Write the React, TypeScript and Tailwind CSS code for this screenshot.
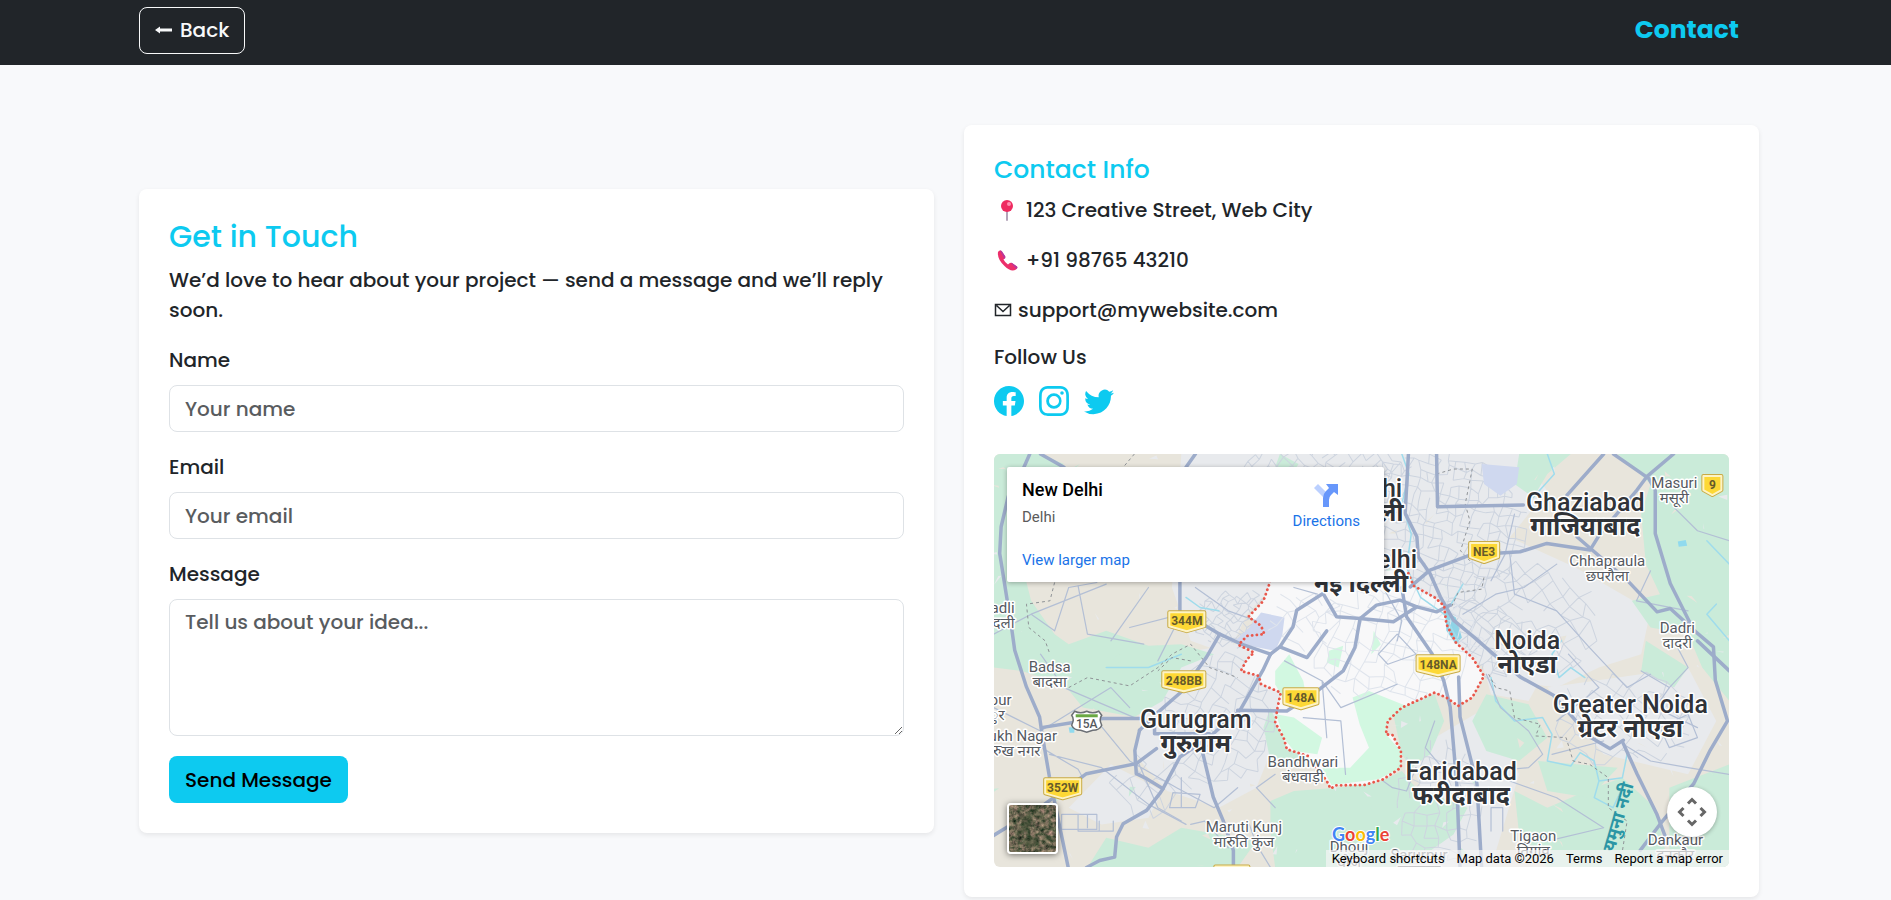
import { useState } from "react";
import type { FormEvent, ReactElement } from "react";
import { BsFacebook, BsInstagram, BsTwitter } from "react-icons/bs";

// ── map helpers ───────────────────────────────────────────────────────────────

function makeRandom(seed: number): () => number {
  let s = seed;
  return () => {
    s = (s * 16807) % 2147483647;
    return s / 2147483647;
  };
}

/** Jittered street grid inside an ellipse, rotated by `angle` degrees. */
function streets(
  cx: number,
  cy: number,
  rx: number,
  ry: number,
  cell: number,
  angle: number,
  seed: number,
): string {
  const rnd = makeRandom(seed);
  const rad = (angle * Math.PI) / 180;
  const reach = Math.ceil(Math.max(rx, ry) / cell);
  const pts = new Map<string, [number, number]>();
  for (let i = -reach; i <= reach; i++) {
    for (let j = -reach; j <= reach; j++) {
      const x = i * cell + (rnd() - 0.5) * cell * 0.7;
      const y = j * cell + (rnd() - 0.5) * cell * 0.7;
      const px = x * Math.cos(rad) - y * Math.sin(rad);
      const py = x * Math.sin(rad) + y * Math.cos(rad);
      if ((px / rx) ** 2 + (py / ry) ** 2 > 1) continue;
      pts.set(`${i},${j}`, [cx + px, cy + py]);
    }
  }
  let d = "";
  pts.forEach(([x, y], key) => {
    const [i, j] = key.split(",").map(Number);
    for (const next of [`${i + 1},${j}`, `${i},${j + 1}`]) {
      const p = pts.get(next);
      if (p === undefined || rnd() < 0.22) continue;
      d += `M${x.toFixed(1)} ${y.toFixed(1)}L${p[0].toFixed(1)} ${p[1].toFixed(1)}`;
    }
  });
  return d;
}

/** Small random triangles, used for field and village patches. */
function specks(count: number, size: number, seed: number): string {
  const rnd = makeRandom(seed);
  let d = "";
  for (let i = 0; i < count; i++) {
    const x = rnd() * 735;
    const y = rnd() * 413;
    const p = (): string =>
      `${(x + (rnd() - 0.5) * size).toFixed(1)} ${(y + (rnd() - 0.5) * size).toFixed(1)}`;
    d += `M${p()}L${p()}L${p()}Z`;
  }
  return d;
}

// ── map data ──────────────────────────────────────────────────────────────────

// Geometry is kept in survey units (1568 x 1239) and scaled to the map's box.
const SURVEY = "scale(0.46875 0.33333)";

const URBAN = [
  "M400 0H1120L1180 110 1100 250 1240 340 1400 470 1380 600 1290 640 1200 700 1100 680 1000 600 960 440 600 390 540 480 500 600 420 560 380 400Z",
  "M380 600 560 560 610 700 600 860 560 1000 480 1060 370 1010 300 900 330 760Z",
  "M880 900 1050 760 1120 960 1060 1239 900 1239 930 1060Z",
  "M1180 700 1480 640 1540 800 1480 960 1300 900Z",
  "M250 930 360 1010 330 1090 230 1110 160 1060Z",
  "M1030 570 1180 640 1140 740 1060 720Z",
];

const PARKS = [
  "M0 0H100L150 30 90 90 110 210 60 330 80 440 130 540 160 570 240 530 330 575 400 570 470 600 400 640 360 740 300 788 190 760 150 690 60 650 0 640Z",
  "M1330 0H1568V740L1510 640 1480 540 1400 520 1360 440 1420 420 1390 330 1380 180 1400 90Z",
  "M1120 0H1230L1180 60 1150 130 1110 90Z",
  "M590 1040 640 1010 730 1000 820 985 870 950 900 1000 1010 1060 980 1140 880 1239H600L590 1130Z",
  "M850 770 940 720 960 800 930 900 890 940 870 900Z",
  "M590 760 625 880 690 930 590 920 575 820Z",
  "M1050 720 1140 750 1180 850 1120 920 1050 890 1020 800Z",
  "M1110 1010 1180 1060 1280 1000 1340 970 1410 1060 1440 1239H1180L1120 1140Z",
  "M1440 1000 1568 930V1239H1440Z",
  "M200 1239 240 1150 330 1180 400 1120 560 1160 520 1239Z",
  "M1390 560 1480 640 1450 700 1380 650Z",
  "M1160 920 1330 940 1270 1030 1180 1010Z",
  "M610 0 650 30 630 70 600 40Z",
];

const DELHI =
  "M590 380 575 440 543 488 570 515 577 540 540 545 522 572 555 595 540 615 527 650 565 665 570 690 612 715 605 760 600 805 618 850 625 885 670 905 710 980 718 1003 730 993 790 992 830 975 868 940 868 890 850 842 836 840 840 800 870 760 940 715 965 730 990 755 1020 730 1045 665 1020 610 985 565 965 510 960 455 940 430 895 395 880 345";

const DELHI_PARKS = [
  "M602 780 640 790 700 850 690 900 640 890 618 850Z",
  "M765 730 800 710 880 755 840 800 836 840 868 890 868 940 820 975 720 992 700 940 760 940 800 880 780 810Z",
  "M600 650 630 600 660 680 665 720 620 740 600 690Z",
  "M715 590 745 575 735 640 710 625Z",
  "M810 530 825 570 805 600Z",
];

const LAKES = [
  "M570 475 620 490 615 545 600 590 510 565 545 520Z",
  "M1040 30 1120 40 1115 90 1080 125 1045 90Z",
];

const HIGHWAYS = [
  "M77 0 62 48 31 128 16 218 13 298 38 518 45 588 70 698 98 788 102 828 119 968 141 1118 159 1239",
  "M0 1143 105 1053 198 958 304 928 347 883",
  "M102 820 176 803 233 793 311 793",
  "M311 828 301 888 304 958 326 973 361 1003 354 1018 326 1068 276 1108 262 1148 258 1208 226 1218 198 1239",
  "M361 1003 397 908 460 848 525 768 574 648 590 600",
  "M311 828 347 778 404 708 454 608 482 540 525 568 590 600",
  "M440 505 482 540",
  "M397 380V475",
  "M590 600 610 578 638 518 646 468 702 418 731 488 781 493 852 503 902 458",
  "M781 493 816 453 866 438 902 458 944 473 973 453",
  "M781 493 770 580 745 650 690 710 625 770 520 768",
  "M610 578 668 610 710 530",
  "M884 0 877 178 902 248 905 308 930 358 952 428 980 498 1023 548 1072 608 1122 668 1193 723 1271 848 1314 883 1342 858",
  "M944 0 946 158 1129 153",
  "M888 398 930 348 1015 303 1122 293 1179 268 1271 288 1293 238 1335 168 1371 108 1392 68 1449 0",
  "M1222 123 1300 0",
  "M1321 0 1396 73 1410 108 1410 238 1442 388 1492 528 1534 578 1538 678 1564 800 1527 888 1492 988 1421 1108 1378 1188",
  "M1500 560 1568 650",
  "M1243 248 1350 378 1414 473 1442 463 1485 518",
  "M1342 868 1371 958 1413 1078 1435 1160",
  "M870 400 880 488 934 598 959 678 973 758 987 988 994 1239",
  "M991 668 994 788 1030 988 1040 1239",
  "M446 898 468 1028 489 1098 511 1188V1239",
  "M343 810V838H460",
  "M410 40 430 0M100 0 150 40",
];

const LOCAL_ROADS = [
  "M0 540 80 480 240 390M80 480 130 530 160 400 220 385M180 395 200 540 320 570",
  "M0 760 100 830 250 700 290 760M100 600 150 700 300 790",
  "M102 880 180 945 190 970M119 900 230 940 330 1050 410 1110",
  "M220 800 290 920 390 1000 470 1060 520 1000M310 930 350 1060 400 1100",
  "M145 1080H220V1125H145ZM180 1080V1130H255V1100M200 1080V1120M225 1100V1130",
  "M330 400 250 560M290 520 400 480 350 620M560 500 500 470 430 400",
  "M382 1015 440 1020 430 1060 375 1060ZM400 970V1060",
  "M1100 300 1110 420 1200 470 1270 580 1310 640 1350 700 1400 660",
  "M1200 330 1130 400 1070 420 1000 480M1110 180 1090 300 1060 380",
  "M1050 660 1080 760 1140 830 1170 900 1140 940 1060 950",
  "M1380 650 1440 700 1480 640 1450 560M1342 870 1400 920 1480 940 1568 960",
  "M1400 350 1370 440 1480 470M1450 160 1500 230 1568 260M1440 700 1410 760 1500 820",
  "M1060 1130V1060H1085V1130M1100 980 1200 1030 1300 1120 1180 1160",
  "M900 940 880 1010 850 1000 830 980M940 800 920 880 950 930",
  "M1190 900 1300 860M1225 600 1290 700 1200 800M1420 820 1480 780 1500 850 1440 880Z",
  "M620 620 700 680 740 760 860 690M660 790 740 800 750 960M700 680 710 850",
  "M690 420 640 400M820 600 860 540 900 600 840 630ZM830 400 870 500 860 560",
  "M545 1110 560 1170 590 1239M500 1180 450 1100 420 1110M600 1060 560 1000 600 960",
];

const STREAMS = [
  "M870 0 885 60 870 150 890 240 880 340 910 430 960 480 990 560",
  "M1180 0 1195 60 1150 130M1210 560 1190 600 1205 670 1230 640 1260 670",
  "M1060 670 1070 740 1110 800 1170 790 1190 840 1180 920 1230 935 1250 895 1280 920 1290 980 1340 970 1350 900M1290 980 1280 1030 1320 1060 1340 1000",
  "M1540 450 1520 480 1568 560M1520 260 1568 330",
  "M410 430 440 460 480 470M240 640 330 640 400 600M1000 390 975 450",
];

const BORDERS = [
  "M130 385 120 440 70 450 75 520 110 560 120 600 M160 700 200 670 290 695 350 640 380 600 420 570 460 640 520 670",
  "M944 60 980 45 1020 45 1005 150 1015 200 995 290 1015 320M1045 370 1040 405 990 415 975 460",
  "M1055 660 1070 700 1100 710 1110 790 1165 810 1155 845 1220 850 1235 920 1270 930 1310 970 1310 1060 1350 1100 1340 1190",
  "M300 0 270 50M420 620 380 610 350 650",
];

const CITY_GRIDS = [
  streets(440, 75, 95, 80, 9, 12, 3),
  streets(470, 190, 70, 45, 10, 30, 7),
  streets(245, 165, 48, 30, 6, 40, 11),
  streets(225, 265, 58, 72, 11, 25, 19),
  streets(535, 165, 80, 60, 14, 50, 23),
  streets(445, 350, 45, 70, 11, 5, 31),
  streets(630, 265, 75, 50, 13, 38, 43),
  streets(330, 15, 90, 25, 9, 42, 53),
  streets(155, 330, 45, 35, 14, 50, 61),
];
const DELHI_GRID =
  streets(400, 190, 90, 62, 12, 18, 71) + streets(310, 165, 40, 35, 12, 50, 73);

interface Place {
  en: string;
  hi: string;
  x: number;
  y: number;
}

const CITIES: Place[] = [
  { en: "New Delhi", hi: "नई दिल्ली", x: 367, y: 114 },
  { en: "Ghaziabad", hi: "गाजियाबाद", x: 591, y: 57 },
  { en: "Noida", hi: "नोएडा", x: 533, y: 195 },
  { en: "Greater Noida", hi: "ग्रेटर नोएडा", x: 636, y: 259 },
  { en: "Gurugram", hi: "गुरुग्राम", x: 202, y: 274 },
  { en: "Faridabad", hi: "फरीदाबाद", x: 467, y: 326 },
];

const TOWNS: Place[] = [
  { en: "Masuri", hi: "मसूरी", x: 680, y: 34 },
  { en: "Chhapraula", hi: "छपरौला", x: 613, y: 112 },
  { en: "Dadri", hi: "दादरी", x: 683, y: 179 },
  { en: "Badsa", hi: "बादसा", x: 56, y: 218 },
  { en: "Bandhwari", hi: "बंधवाड़ी", x: 309, y: 313 },
  { en: "Maruti Kunj", hi: "मारुति कुंज", x: 250, y: 378 },
  { en: "Tigaon", hi: "तिगांव", x: 539, y: 387 },
  { en: "Dankaur", hi: "दनकौर", x: 681, y: 391 },
  { en: "Dhouj", hi: "धौज", x: 355, y: 398 },
  { en: "Sarurpur", hi: "सरूरपुर", x: 425, y: 406 },
];

const SHIELDS = [
  { name: "344M", x: 193, y: 167, w: 35 },
  { name: "248BB", x: 190, y: 227, w: 41 },
  { name: "148A", x: 307, y: 244, w: 33 },
  { name: "148NA", x: 444, y: 211, w: 41 },
  { name: "352W", x: 69, y: 334, w: 35 },
  { name: "NE3", x: 490, y: 98, w: 28 },
  { name: "9", x: 718, y: 31, w: 18 },
  { name: "", x: 238, y: 421, w: 33 },
];

// ── map drawing ───────────────────────────────────────────────────────────────

function MapDrawing(): ReactElement {
  return (
    <svg
      viewBox="0 0 735 413"
      preserveAspectRatio="xMidYMid slice"
      className="absolute inset-0 h-full w-full font-[Roboto,'Noto_Sans',sans-serif]"
      role="img"
      aria-label="Map of New Delhi"
    >
      <rect width="735" height="413" fill="#e8e5dc" />
      <g transform={SURVEY}>
        {URBAN.map((d) => (
          <path key={d} d={d} fill="#e8eaed" />
        ))}
        {PARKS.map((d) => (
          <path key={d} d={d} fill="#caebd9" />
        ))}
      </g>
      <path d={specks(60, 14, 5)} fill="#e8e5dc" />
      <path d={specks(80, 10, 17)} fill="#e8eaed" />
      <path d={specks(22, 13, 29)} fill="#caebd9" />
      {CITY_GRIDS.map((d) => (
        <path key={d.slice(0, 24)} d={d} fill="none" stroke="#cdd4df" strokeWidth="1" />
      ))}
      <g transform={SURVEY}>
        <path d={DELHI} fill="#f8f8f9" />
        {DELHI_PARKS.map((d) => (
          <path key={d} d={d} fill="#d2f8e1" />
        ))}
        {LAKES.map((d) => (
          <path key={d} d={d} fill="#cfd8ef" />
        ))}
        <path d="M962 470 985 490 998 550 985 570 965 530Z" fill="#8fd3e6" />
        <path d="M1458 262 1475 258 1478 275 1460 278ZM160 820 172 818 172 835 162 835Z" fill="#90daee" />
      </g>
      <path d={DELHI_GRID} fill="none" stroke="#dfe4ec" strokeWidth="1" />
      <g transform={SURVEY} fill="none" strokeLinejoin="round" strokeLinecap="round">
        {STREAMS.map((d) => (
          <path key={d} d={d} stroke="#9fdcec" strokeWidth="1.5" vectorEffect="non-scaling-stroke" />
        ))}
        {LOCAL_ROADS.map((d) => (
          <path key={d} d={d} stroke="#b3bfd5" strokeWidth="1.2" vectorEffect="non-scaling-stroke" />
        ))}
        {BORDERS.map((d) => (
          <path
            key={d}
            d={d}
            stroke="#8f9397"
            strokeWidth="1"
            strokeDasharray="3 3"
            strokeLinecap="butt"
            vectorEffect="non-scaling-stroke"
          />
        ))}
        {HIGHWAYS.map((d) => (
          <path key={d} d={d} stroke="#9dacca" strokeWidth="3.5" vectorEffect="non-scaling-stroke" />
        ))}
        <path
          d={DELHI}
          stroke="#e9574b"
          strokeWidth="2.8"
          strokeDasharray="0.1 4.6"
          vectorEffect="non-scaling-stroke"
        />
      </g>

      {/* Road shields */}
      {SHIELDS.map((s) => (
        <g key={s.name} transform={`translate(${s.x} ${s.y})`}>
          <path
            d={`M${-s.w / 2} -9H${s.w / 2}V5L0 10L${-s.w / 2} 5Z`}
            fill="#fdd835"
            stroke="#c9ab45"
            strokeWidth="4"
            strokeLinejoin="round"
          />
          <path
            d={`M${-s.w / 2} -9H${s.w / 2}V5L0 10L${-s.w / 2} 5Z`}
            fill="#fdd835"
            stroke="#fdf3c4"
            strokeWidth="2"
            strokeLinejoin="round"
          />
          <text y="4" textAnchor="middle" fontSize="12" fontWeight="700" fill="#655a2b">
            {s.name}
          </text>
        </g>
      ))}
      <g transform="translate(93 267)">
        <path
          d="M-12 -10Q-6 -7 0 -10Q6 -7 12 -10L15 -6Q12 -2 15 4Q13 9 6 9L0 11L-6 9Q-13 9 -15 4Q-12 -2 -15 -6Z"
          fill="#fff"
          stroke="#6b6f75"
          strokeWidth="1.5"
        />
        <path d="M-11 -7H11V-4H-11Z" fill="#6aa843" />
        <text y="7" textAnchor="middle" fontSize="12" fontWeight="500" fill="#55585d">
          15A
        </text>
      </g>

      {/* Place names */}
      <g textAnchor="middle" stroke="#fff" strokeWidth="3" strokeLinejoin="round" paintOrder="stroke">
        <g fill="#55595f" fontSize="15">
          {TOWNS.map((p) => (
            <text key={p.en} x={p.x} y={p.y}>
              {p.en}
              <tspan x={p.x} dy="15">
                {p.hi}
              </tspan>
            </text>
          ))}
          <g textAnchor="start">
            <text x="-3" y="159">
              adli
              <tspan x="-1" dy="15">
                दली
              </tspan>
            </text>
            <text x="-4" y="251">
              our
              <tspan x="-4" dy="15">
                ुर
              </tspan>
            </text>
            <text x="-5" y="287">
              ukh Nagar
              <tspan x="-1" dy="15">
                रुख नगर
              </tspan>
            </text>
          </g>
        </g>
        <g fill="#303338" fontSize="25" fontWeight="500">
          <text x="380" y="43">
            Delhi
            <tspan x="380" dy="24" fontWeight="700">
              दिल्ली
            </tspan>
          </text>
          {CITIES.map((p) => (
            <text key={p.en} x={p.x} y={p.y}>
              {p.en}
              <tspan x={p.x} dy="24" fontWeight="700">
                {p.hi}
              </tspan>
            </text>
          ))}
        </g>
      </g>
      <text
        transform="translate(620 398) rotate(-74)"
        fontSize="18"
        fontWeight="700"
        fill="#2b96a5"
      >
        यमुना नदी
      </text>
      <text
        x="338"
        y="387"
        fontSize="18"
        fontWeight="700"
        stroke="#fff"
        strokeWidth="2"
        paintOrder="stroke"
        className="font-[Lato,sans-serif]"
      >
        <tspan fill="#4285f4">G</tspan>
        <tspan fill="#ea4335">o</tspan>
        <tspan fill="#fbbc04">o</tspan>
        <tspan fill="#4285f4">g</tspan>
        <tspan fill="#34a853">l</tspan>
        <tspan fill="#ea4335">e</tspan>
      </text>
    </svg>
  );
}

function SatelliteThumb(): ReactElement {
  return (
    <svg viewBox="0 0 48 48" className="block h-full w-full">
      <defs>
        <filter id="terrain" x="0" y="0" width="100%" height="100%" colorInterpolationFilters="sRGB">
          <feTurbulence type="fractalNoise" baseFrequency="0.22" numOctaves="5" seed="8" />
          <feColorMatrix values="0.9 0.1 0 0 -0.08  0.6 0.2 0 0 0  0.6 0.1 0 0 -0.03  0 0 0 0 1" />
        </filter>
        <filter id="soften">
          <feGaussianBlur stdDeviation="1.5" />
        </filter>
      </defs>
      <rect width="48" height="48" filter="url(#terrain)" />
      <path
        d="M26 0Q26 8 31 12T38 24M8 30Q16 22 14 12L22 9Q24 20 18 26ZM14 36Q22 30 30 34L27 42Q18 44 14 36ZM34 34Q42 30 46 38"
        fill="#2f4429"
        fillOpacity="0.5"
        stroke="#2f4429"
        strokeOpacity="0.5"
        strokeWidth="2"
        filter="url(#soften)"
      />
    </svg>
  );
}

function MapPanel(): ReactElement {
  return (
    <div className="relative aspect-video overflow-hidden rounded-md font-[Roboto,sans-serif] font-normal">
      <MapDrawing />

      <div className="absolute top-[13px] left-[13px] flex w-[377px] justify-between rounded-xs bg-white pt-[11px] pr-6 pb-3 pl-[15px] shadow-[0_1px_5px_rgba(0,0,0,0.3)]">
        <div className="flex flex-col items-start">
          <p className="text-[18px] leading-6 font-medium text-black">New Delhi</p>
          <p className="mt-1 text-[15px] leading-[22px] text-[#5b5b5b]">Delhi</p>
          <a href="#map" className="mt-[22px] text-[15px] leading-5 text-[#1a73e8]">
            View larger map
          </a>
        </div>
        <a href="#directions" className="flex flex-col items-center pt-[5px] text-[15px] leading-5 text-[#1a73e8]">
          <svg viewBox="0 0 24 24" className="mb-1 h-6 w-6">
            <path d="M4 1 14 11 10 15 0 5Z" fill="#bbd0ff" />
            <path d="M9 24V15Q9 11 12 8L15 5 12 1H24V12L20 9 17 12Q15 14 15 17V24Z" fill="#6797fb" />
          </svg>
          Directions
        </a>
      </div>

      <button
        type="button"
        aria-label="Show satellite imagery"
        className="absolute bottom-[13px] left-[13px] h-[51px] w-[51px] overflow-hidden rounded-sm border-2 border-white shadow-[0_1px_6px_rgba(0,0,0,0.5)]"
      >
        <SatelliteThumb />
      </button>

      <button
        type="button"
        aria-label="Map camera controls"
        className="absolute right-3 bottom-[30px] flex h-[50px] w-[50px] items-center justify-center rounded-full bg-white shadow-[0_1px_4px_rgba(0,0,0,0.3)]"
      >
        <svg viewBox="0 0 30 30" className="h-[30px] w-[30px]" fill="none" stroke="#666" strokeWidth="3">
          <path d="M11 6.5 15 2.5 19 6.5M11 23.5 15 27.5 19 23.5M6.5 11 2.5 15 6.5 19M23.5 11 27.5 15 23.5 19" />
        </svg>
      </button>

      <div className="absolute right-0 bottom-0 flex text-[13px] leading-[17px] text-black">
        <button type="button" className="bg-[#f5f5f5]/70 px-[6px]">
          Keyboard shortcuts
        </button>
        <span className="bg-[#f5f5f5]/70 px-[6px]">Map data ©2026</span>
        <a href="#terms" className="bg-[#f5f5f5]/70 px-[6px]">
          Terms
        </a>
        <a href="#report" className="bg-[#f5f5f5]/70 px-[6px]">
          Report a map error
        </a>
      </div>
    </div>
  );
}

// ── contact icons ─────────────────────────────────────────────────────────────

function PinIcon(): ReactElement {
  return (
    <svg viewBox="0 0 25 25" className="mr-[7px] h-[25px] w-[25px]">
      <rect x="12" y="11" width="2" height="12" rx="1" fill="#b3a3b8" />
      <circle cx="13" cy="8" r="6" fill="#ee2b60" />
      <circle cx="15" cy="6" r="2" fill="#ff8fb0" />
    </svg>
  );
}

function PhoneIcon(): ReactElement {
  return (
    <svg viewBox="0 0 25 25" className="mr-[7px] h-[25px] w-[25px]">
      <path
        d="M4 4Q6 1.5 8 3.5L11 8Q12 10 9.5 11.5Q11 14.5 14 16.5Q16 14 18 15L23 18.5Q24 20 22 21.5Q17 24.5 10.5 18Q3 11 4 4Z"
        fill="#ec2f6b"
      />
      <path
        d="M6 2.5Q7 2 8 3.5L11 8Q12 9.5 10.5 11ZM17 15Q17.5 14.5 18 15L23 18.5Q24 19.5 22.5 21Z"
        fill="#b5389f"
      />
    </svg>
  );
}

function MailIcon(): ReactElement {
  return (
    <svg viewBox="0 0 18 14" className="mr-[6px] h-[14px] w-[18px]" fill="none" stroke="#212529" strokeWidth="1.5">
      <path d="M1.5 1.5H16.5V12.5H1.5ZM2.5 2.5 9 8.5 15.5 2.5" />
    </svg>
  );
}

// ── page ──────────────────────────────────────────────────────────────────────

const FIELD =
  "block w-full rounded-lg border border-[#dee2e6] bg-white px-[15px] placeholder:text-[#595c5f] focus:border-[#0dcaf0] focus:outline-none";

function ContactForm(): ReactElement {
  const [name, setName] = useState("");
  const [email, setEmail] = useState("");
  const [message, setMessage] = useState("");

  const handleSubmit = (event: FormEvent<HTMLFormElement>): void => {
    event.preventDefault();
    setName("");
    setEmail("");
    setMessage("");
  };

  return (
    <section className="rounded-lg bg-white p-[30px] shadow-[0_2px_5px_rgba(0,0,0,0.08)]">
      <h2 className="mb-[10px] text-[30px] leading-9 font-medium text-[#0dcaf0]">Get in Touch</h2>
      <p className="mb-5">We’d love to hear about your project — send a message and we’ll reply soon.</p>
      <form onSubmit={handleSubmit} className="flex flex-col items-start gap-5">
        <div className="w-full">
          <label htmlFor="name" className="mb-[10px] block">
            Name
          </label>
          <input
            id="name"
            type="text"
            value={name}
            onChange={(e) => setName(e.target.value)}
            placeholder="Your name"
            className={`${FIELD} h-[47px]`}
          />
        </div>
        <div className="w-full">
          <label htmlFor="email" className="mb-[10px] block">
            Email
          </label>
          <input
            id="email"
            type="email"
            value={email}
            onChange={(e) => setEmail(e.target.value)}
            placeholder="Your email"
            className={`${FIELD} h-[47px]`}
          />
        </div>
        <div className="w-full">
          <label htmlFor="message" className="mb-[10px] block">
            Message
          </label>
          <textarea
            id="message"
            rows={4}
            value={message}
            onChange={(e) => setMessage(e.target.value)}
            placeholder="Tell us about your idea..."
            className={`${FIELD} h-[137px] resize-y py-[7px]`}
          />
        </div>
        <button type="submit" className="h-[47px] rounded-lg bg-[#0dcaf0] px-4 text-black">
          Send Message
        </button>
      </form>
    </section>
  );
}

function ContactInfo(): ReactElement {
  return (
    <section className="rounded-lg bg-white p-[30px] shadow-[0_2px_5px_rgba(0,0,0,0.08)]">
      <h4 className="mb-[10px] text-[25px] leading-[30px] font-medium text-[#0dcaf0]">Contact Info</h4>
      <p className="mb-5 flex items-center">
        <PinIcon />
        123 Creative Street, Web City
      </p>
      <p className="mb-5 flex items-center">
        <PhoneIcon />
        +91 98765 43210
      </p>
      <p className="mb-5 flex items-center">
        <MailIcon />
        support@mywebsite.com
      </p>
      <h5 className="mb-[10px] leading-6">Follow Us</h5>
      <div className="mb-[30px] flex h-[45px] items-start gap-[15px] pt-[7px] text-[30px] text-[#0dcaf0]">
        <a href="#facebook" aria-label="Facebook">
          <BsFacebook />
        </a>
        <a href="#instagram" aria-label="Instagram">
          <BsInstagram />
        </a>
        <a href="#twitter" aria-label="Twitter">
          <BsTwitter />
        </a>
      </div>
      <MapPanel />
    </section>
  );
}

export default function App(): ReactElement {
  return (
    <div className="min-h-screen bg-[#f8f9fb] font-[Poppins,Inter,sans-serif] text-xl leading-[30px] font-medium text-[#212529]">
      <header className="bg-[#212529] pl-[7px]">
        <nav className="mx-auto flex h-[65px] max-w-[1620px] items-center justify-between pr-5 pb-[5px]">
          <a
            href="#home"
            className="flex h-[47px] items-center gap-2 rounded-lg border border-[#f8f9fa] px-[15px] text-[#f8f9fa]"
          >
            <svg viewBox="0 0 17 8" className="h-2 w-[17px]" fill="currentColor">
              <path d="M0 4 5 0.5V2.5H17V5.5H5V7.5Z" />
            </svg>
            Back
          </a>
          <span className="text-[25px] font-bold text-[#0dcaf0]">Contact</span>
        </nav>
      </header>
      <main className="pt-[60px] pl-[7px]">
        <div className="mx-auto grid max-w-[1620px] grid-cols-1 items-center gap-[30px] lg:grid-cols-2">
          <ContactForm />
          <ContactInfo />
        </div>
      </main>
    </div>
  );
}
